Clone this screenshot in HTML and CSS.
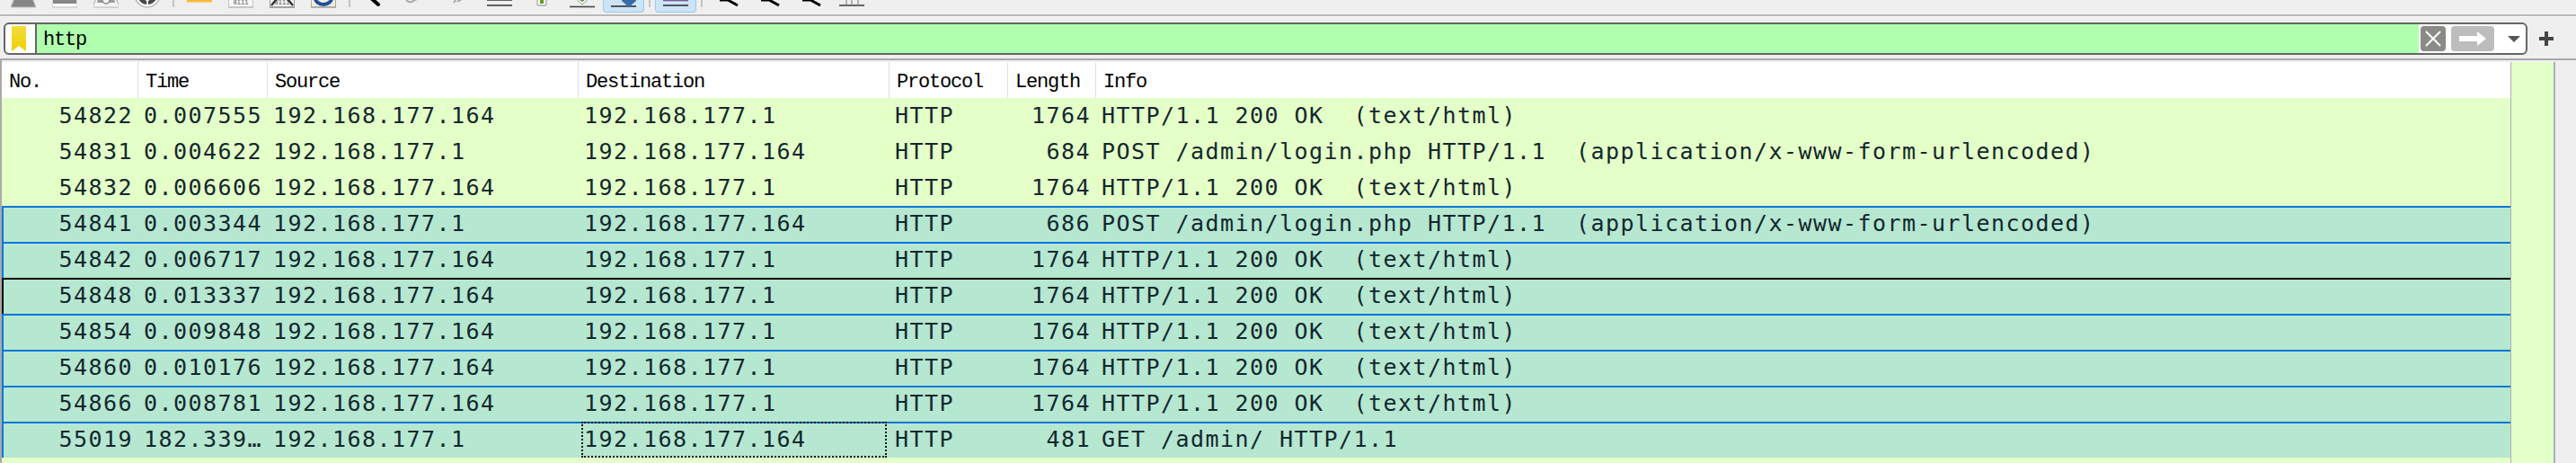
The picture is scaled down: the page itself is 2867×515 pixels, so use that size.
FILE: index.html
```html
<!DOCTYPE html>
<html lang="en">
<head>
  <meta charset="UTF-8" />
  <title>http - Wireshark</title>
  <link rel="stylesheet" href="styles.css">
</head>
<body>
  <div class="toolbar">
    <span class="tool"><svg viewBox="0 0 28 9"><path d="M4 -2H24L28 8H0Z" fill="#868686" stroke="#bdbdbd" stroke-width="1.2"/></svg></span>
    <span class="tool"><svg viewBox="0 0 28 9"><path d="M0 -2H28V8H0Z" fill="#fff" stroke="#bdbdbd" stroke-width="1.2"/><rect x="1" y="-2" width="26" height="6" fill="#868686"/></svg></span>
    <span class="tool"><svg viewBox="0 0 28 9"><path d="M3 -2H25L29 8H-1Z" fill="#f4f4f4" stroke="#b5b5b5" stroke-width="1.2"/><path d="M5 -2H23L24 3H4Z" fill="#9a9a9a"/><circle cx="14" cy="0" r="4" fill="#f4f4f4" stroke="#8c8c8c" stroke-width="1.6"/></svg></span>
    <span class="tool"><svg viewBox="0 0 28 9"><circle cx="14" cy="-6" r="14" fill="#f6f6f6" stroke="#a8a8a8" stroke-width="1.2"/><circle cx="14" cy="-6" r="11" fill="#484848"/><path d="M14 -4V6M10 -3L14 1L18 -3" stroke="#efefef" stroke-width="2" fill="none"/></svg></span>
    <span class="tool-sep"></span>
    <span class="tool"><svg viewBox="0 0 28 9"><rect x="0" y="-1" width="28" height="3.5" fill="#fdb93a"/></svg></span>
    <span class="tool"><svg viewBox="0 0 28 9"><path d="M0 -2V8H28V-2" fill="#f7f7f7" stroke="#b8b8b8" stroke-width="1.6"/><text x="14" y="5" class="bits">0111</text></svg></span>
    <span class="tool"><svg viewBox="0 0 28 9"><path d="M0 -2V8H28V-2" fill="#f2f2f2" stroke="#8b8b8b" stroke-width="1.6"/><text x="14" y="5" class="bits">0111</text><path d="M8 -1L2 6M20 -1L26 6" stroke="#333" stroke-width="2.4"/></svg></span>
    <span class="tool"><svg viewBox="0 0 28 9"><path d="M0 -2V8H28V-2" fill="#f2eedd" stroke="#9a9a9a" stroke-width="1.6"/><path d="M5 -2A9 7 0 0 0 23 -2" fill="none" stroke="#1f4f9c" stroke-width="4"/></svg></span>
    <span class="tool-sep"></span>
    <span class="tool"><svg viewBox="0 0 28 9"><path d="M9 -2L17 5" stroke="#000" stroke-width="4" stroke-linecap="round"/></svg></span>
    <span class="tool"><svg viewBox="0 0 28 9"><path d="M2 0Q6 4 10 1L14 -1" stroke="#a8a8a8" stroke-width="2" fill="none"/></svg></span>
    <span class="tool"><svg viewBox="0 0 28 9"><path d="M9 3L12 -1M13 2L18 -1" stroke="#a8a8a8" stroke-width="2" fill="none"/></svg></span>
    <span class="tool"><svg viewBox="0 0 28 9"><path d="M0 0H28M0 6H28" stroke="#333" stroke-width="1.6"/></svg></span>
    <span class="tool"><svg viewBox="0 0 28 9"><rect x="10" y="-3" width="10" height="9" rx="1.5" fill="#fff" stroke="#aaa" stroke-width="1.4"/><rect x="13" y="-1" width="4" height="5" fill="#5c9a1e"/></svg></span>
    <span class="tool"><svg viewBox="0 0 28 9"><path d="M0 7.500H28" stroke="#444" stroke-width="1.6"/><path d="M9 -2H19V1L14 5L9 1Z" fill="#fff" stroke="#9a9a9a"/><path d="M11 -2H17V0L14 2L11 0Z" fill="#5c9a1e"/></svg></span>
    <span class="tool on"><svg viewBox="0 0 28 9"><path d="M0 7H28" stroke="#333" stroke-width="1.6"/><path d="M12 -2H28V1L20 8L12 1Z" fill="#3a6cab"/></svg></span>
    <span class="tool-sep"></span>
    <span class="tool on"><svg viewBox="0 0 28 9"><path d="M0 0.500H28" stroke="#7a5a8c" stroke-width="1.6"/><path d="M0 6H28" stroke="#333" stroke-width="1.6"/></svg></span>
    <span class="tool-sep"></span>
    <span class="tool"><svg viewBox="0 0 28 9"><path d="M5 0H14L25 6" fill="none" stroke="#000" stroke-width="3"/></svg></span>
    <span class="tool"><svg viewBox="0 0 28 9"><path d="M5 0H14L25 6" fill="none" stroke="#000" stroke-width="3"/></svg></span>
    <span class="tool"><svg viewBox="0 0 28 9"><path d="M5 0H14L25 6" fill="none" stroke="#000" stroke-width="3"/></svg></span>
    <span class="tool"><svg viewBox="0 0 28 9"><path d="M0 6H28" stroke="#444" stroke-width="1.6"/><path d="M8 -2V6M14 -2V6M21 -2V6" stroke="#8a8a8a" stroke-width="1.2"/></svg></span>
  </div>

  <div class="filter-row">
    <div class="filter">
      <span class="bookmark"><svg width="16" height="28" viewBox="0 0 16 28"><defs><linearGradient id="mark" x1="0" y1="0" x2="0" y2="1"><stop offset="0" stop-color="#f3dc3c"/><stop offset="1" stop-color="#eed000"/></linearGradient></defs><path d="M1 0H15Q16 0 16 1V28L8 22L0 28V1Q0 0 1 0Z" fill="url(#mark)"/></svg></span>
      <span class="filter-text">http</span>
      <span class="clear-btn"><svg width="18" height="18" viewBox="0 0 18 18"><path d="M1 1L17 17M17 1L1 17" stroke="#fff" stroke-width="2"/></svg></span>
      <span class="apply-btn"><svg width="32" height="18" viewBox="0 0 32 18"><path d="M1 6H21V1L31 9L21 17V12H1Z" fill="#fff"/></svg></span>
      <span class="drop-arrow"></span>
    </div>
    <span class="add-btn"><svg width="16" height="16" viewBox="0 0 16 16"><path d="M8 0V16M0 8H16" stroke="#444" stroke-width="4"/></svg></span>
  </div>

  <div class="packet-list">
    <div class="packets">
      <div class="head">
        <span class="no">No.</span><span>Time</span><span>Source</span><span>Destination</span><span>Protocol</span><span>Length</span><span>Info</span>
      </div>
      <div class="row">
        <span class="no">54822</span><span>0.007555</span><span>192.168.177.164</span><span>192.168.177.1</span><span>HTTP</span><span class="len">1764</span><span>HTTP/1.1 200 OK  (text/html)</span>
      </div>
      <div class="row">
        <span class="no">54831</span><span>0.004622</span><span>192.168.177.1</span><span>192.168.177.164</span><span>HTTP</span><span class="len">684</span><span>POST /admin/login.php HTTP/1.1  (application/x-www-form-urlencoded)</span>
      </div>
      <div class="row">
        <span class="no">54832</span><span>0.006606</span><span>192.168.177.164</span><span>192.168.177.1</span><span>HTTP</span><span class="len">1764</span><span>HTTP/1.1 200 OK  (text/html)</span>
      </div>
      <div class="row sel">
        <span class="no">54841</span><span>0.003344</span><span>192.168.177.1</span><span>192.168.177.164</span><span>HTTP</span><span class="len">686</span><span>POST /admin/login.php HTTP/1.1  (application/x-www-form-urlencoded)</span>
      </div>
      <div class="row sel">
        <span class="no">54842</span><span>0.006717</span><span>192.168.177.164</span><span>192.168.177.1</span><span>HTTP</span><span class="len">1764</span><span>HTTP/1.1 200 OK  (text/html)</span>
      </div>
      <div class="row sel current">
        <span class="no">54848</span><span>0.013337</span><span>192.168.177.164</span><span>192.168.177.1</span><span>HTTP</span><span class="len">1764</span><span>HTTP/1.1 200 OK  (text/html)</span>
      </div>
      <div class="row sel">
        <span class="no">54854</span><span>0.009848</span><span>192.168.177.164</span><span>192.168.177.1</span><span>HTTP</span><span class="len">1764</span><span>HTTP/1.1 200 OK  (text/html)</span>
      </div>
      <div class="row sel">
        <span class="no">54860</span><span>0.010176</span><span>192.168.177.164</span><span>192.168.177.1</span><span>HTTP</span><span class="len">1764</span><span>HTTP/1.1 200 OK  (text/html)</span>
      </div>
      <div class="row sel">
        <span class="no">54866</span><span>0.008781</span><span>192.168.177.164</span><span>192.168.177.1</span><span>HTTP</span><span class="len">1764</span><span>HTTP/1.1 200 OK  (text/html)</span>
      </div>
      <div class="row sel">
        <span class="no">55019</span><span>182.339…</span><span>192.168.177.1</span><span class="focus">192.168.177.164</span><span>HTTP</span><span class="len">481</span><span>GET /admin/ HTTP/1.1</span>
      </div>
    </div>
    <div class="scroll-track"></div>
  </div>
</body>
</html>
```

FILE: styles.css
```css
* {
  margin: 0;
  padding: 0;
  box-sizing: border-box;
}

html,
body {
  height: 515px;
  overflow: hidden;
}

body {
  background: #efefef;
  font-family: "DejaVu Sans Mono", monospace;
}

/* toolbar, cut off by the top of the picture */
.toolbar {
  display: flex;
  align-items: flex-start;
  height: 18px;
  padding-left: 3px;
  border-bottom: 2px solid #b9b9b9;
  overflow: hidden;
}

.tool {
  display: flex;
  justify-content: center;
  flex: 0 0 46px;
  height: 14px;
  border-radius: 0 0 4px 4px;
}

.tool svg {
  display: block;
  width: 28px;
  height: 9px;
  overflow: hidden;
}

.tool.on {
  background: #cce4f7;
  border: 1px solid #99c9ef;
  border-top: none;
}

.tool-sep {
  flex: 0 0 12px;
  height: 8px;
  display: block;
  background: linear-gradient(#c4c4c4, #c4c4c4) center / 2px 100% no-repeat;
}

.bits {
  font-family: "DejaVu Sans Mono", monospace;
  font-size: 7px;
  font-weight: bold;
  fill: #8a8a8a;
  text-anchor: middle;
}

/* display filter */
.filter-row {
  display: flex;
  align-items: flex-start;
  height: 49px;
  padding: 6px 0 0 4px;
  border-top: 1px solid #fafafa;
  border-bottom: 2px solid #a9a9a9;
}

.filter {
  display: flex;
  align-items: center;
  width: 2809px;
  height: 36px;
  border: 2px solid #666;
  border-radius: 6px;
  background: #fff;
  overflow: hidden;
}

.bookmark {
  display: flex;
  align-items: center;
  justify-content: center;
  flex: 0 0 35px;
  height: 100%;
  padding-right: 3px;
  border-right: 2px solid #666;
}

.filter-text {
  flex: 0 0 2651px;
  height: 100%;
  padding: 4px 0 0 7px;
  background: #afffaf;
  color: #000;
  font-family: "Liberation Mono", monospace;
  font-size: 22px;
  letter-spacing: -1.2px;
  line-height: 28px;
}

.clear-btn,
.apply-btn {
  display: flex;
  align-items: center;
  justify-content: center;
  height: 28px;
  border-radius: 4px;
}

.clear-btn {
  flex: 0 0 28px;
  margin-left: 2px;
  background: #8a8a86;
}

.apply-btn {
  flex: 0 0 48px;
  margin-left: 6px;
  background: #bdbdbd;
}

.drop-arrow {
  margin-left: 15px;
  border-top: 7px solid #555;
  border-left: 7px solid transparent;
  border-right: 7px solid transparent;
}

.add-btn {
  display: flex;
  margin: 10px 0 0 13px;
}

/* packet list */
.packet-list {
  display: flex;
  height: 448px;
  border-left: 2px solid #aaa;
  padding-top: 2px;
}

.packets {
  flex: 0 0 2792px;
  background: #e4ffc7;
}

.scroll-track {
  flex: 0 0 50px;
  background: #e4ffc7;
  border-left: 1px solid #b0b0b0;
  border-right: 2px solid #b0b0b0;
}

.head,
.row {
  display: grid;
  grid-template-columns: 149px 144px 346px 346px 132px 98px 1575px;
  border-left: 2px solid transparent;
}

.head {
  height: 40px;
  background: #fff;
  color: #000;
  font-family: "Liberation Mono", monospace;
  font-size: 22px;
  letter-spacing: -1.2px;
  line-height: 34px;
}

.head span {
  padding: 6px 0 0 8px;
  border-left: 1px solid #e0e0e0;
}

.head .no {
  padding-left: 6px;
  border-left: none;
}

.row {
  height: 40px;
  border-top: 2px solid transparent;
  color: #12272e;
  font-size: 25px;
  letter-spacing: 1.45px;
  line-height: 36px;
  white-space: pre;
}

.row span {
  padding-left: 7px;
}

.row .no,
.row .len {
  padding: 0 5px 0 0;
  text-align: right;
}

.row.sel {
  background: #b6e7d1;
  border-top-color: #0078d7;
  border-left-color: #0078d7;
}

.row.current {
  border-top-color: #000;
  border-left-color: #000;
}

.row .focus {
  margin: -2px 2px 0 4px;
  padding-left: 3px;
  line-height: 40px;
  outline: 2px dotted #111;
  outline-offset: -2px;
}
```
